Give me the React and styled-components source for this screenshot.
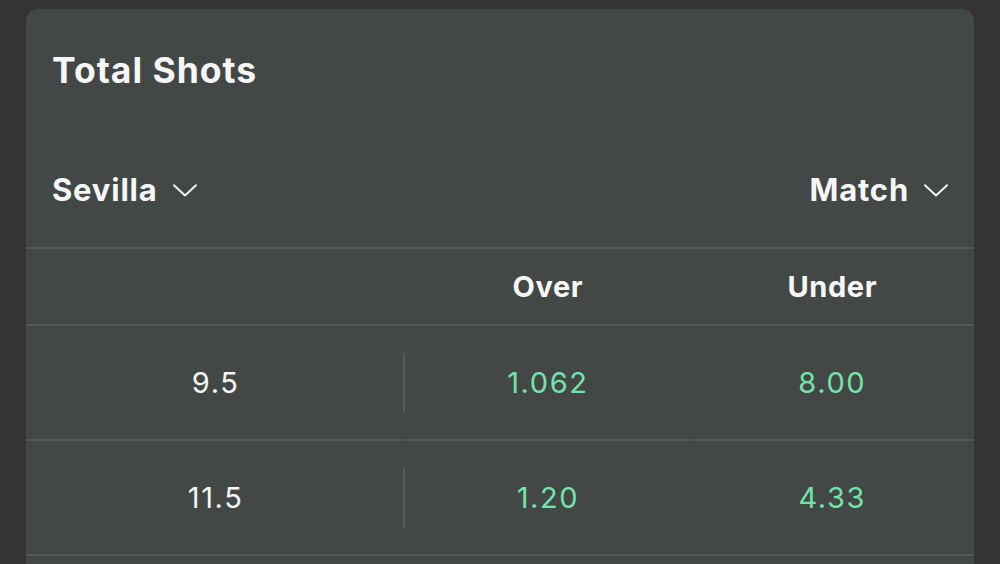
import React from "react";
import styled, { createGlobalStyle } from "styled-components";

const Global = createGlobalStyle`
  html, body { margin: 0; padding: 0; background: #343434; }
  body { font-family: Inter, "Noto Sans", "Liberation Sans", sans-serif; -webkit-font-smoothing: antialiased; }
  #root { min-height: 564px; }
`;

const Page = styled.div`
  height: 564px;
  overflow: hidden;
  padding: 9px 26px 0;
  box-sizing: border-box;
  background: #343434;
`;

const Card = styled.section`
  background: #434746;
  border-radius: 12px 12px 0 0;
  min-height: 600px;
  color: #f6f6f6;
`;

const Title = styled.h2`
  margin: 0;
  padding: 42px 26px 0;
  font-size: 35.5px;
  line-height: 40px;
  font-weight: 700;
  letter-spacing: 1px;
`;

const SelectorRow = styled.div`
  display: flex;
  justify-content: space-between;
  align-items: center;
  padding: 79px 26px 37px;
  border-bottom: 2px solid #555857;
`;

const Selector = styled.button`
  display: flex;
  align-items: center;
  gap: 15px;
  background: none;
  border: 0;
  padding: 0;
  color: #f6f6f6;
  font: inherit;
  font-size: 31px;
  line-height: 40px;
  font-weight: 700;
  letter-spacing: 0.8px;
`;

const Grid = styled.div`
  display: grid;
  grid-template-columns: 40% 1fr 1fr;
  column-gap: 1px;
`;

const Cell = styled.div`
  display: flex;
  align-items: center;
  justify-content: center;
  height: ${(p) => (p.$head ? "75px" : "113px")};
  border-bottom: 2px solid #555857;
  font-size: 29px;
  font-weight: ${(p) => (p.$head ? 700 : 400)};
  letter-spacing: ${(p) => (p.$head ? "0.6px" : "1.6px")};
  color: ${(p) => (p.$odds ? "#72e4ab" : "#f6f6f6")};
  position: relative;
`;

const LineCell = styled(Cell)`
  &::after {
    content: "";
    position: absolute;
    right: 0;
    top: 50%;
    width: 2px;
    height: 60px;
    margin-top: -30px;
    background: #585b5a;
  }
`;

const Chevron = () => (
  <svg width="24" height="13" viewBox="0 0 24 13" fill="none">
    <path d="M1 1.2 L12 11.5 L23 1.2" stroke="#f2f2f2" strokeWidth="2" strokeLinecap="round" strokeLinejoin="round" />
  </svg>
);

const rows = [
  { line: "9.5", over: "1.062", under: "8.00" },
  { line: "11.5", over: "1.20", under: "4.33" },
];

export default function App() {
  return (
    <>
      <Global />
      <Page>
        <Card>
          <Title>Total Shots</Title>
          <SelectorRow>
            <Selector>
              Sevilla <Chevron />
            </Selector>
            <Selector>
              Match <Chevron />
            </Selector>
          </SelectorRow>
          <Grid>
            <Cell $head />
            <Cell $head>Over</Cell>
            <Cell $head>Under</Cell>
            {rows.map((r) => (
              <React.Fragment key={r.line}>
                <LineCell>{r.line}</LineCell>
                <Cell $odds>{r.over}</Cell>
                <Cell $odds>{r.under}</Cell>
              </React.Fragment>
            ))}
          </Grid>
        </Card>
      </Page>
    </>
  );
}
